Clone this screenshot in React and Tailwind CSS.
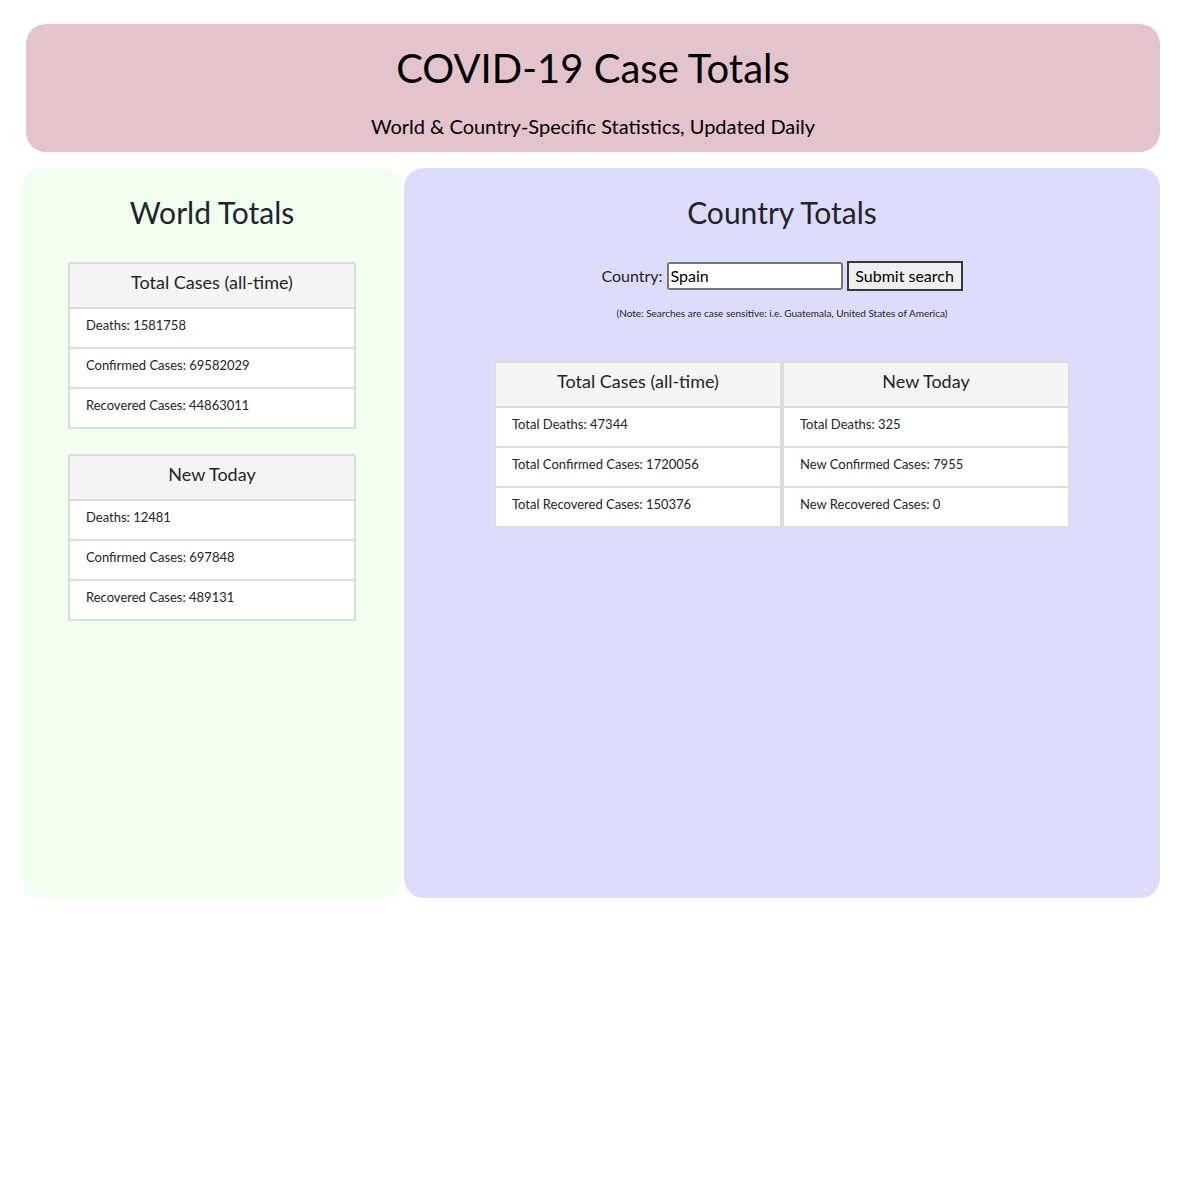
import React from "react";

function Card({ title, rows }) {
  return (
    <div className="w-[288px] border-2 border-[#dcdcdc] rounded-[3px] bg-white">
      <div className="h-[45px] bg-[#f5f5f5] pt-[7px] text-center text-[18px] leading-[22px] text-[#212529] border-b-2 border-[#dcdcdc]">
        {title}
      </div>
      {rows.map((r, i) => (
        <div
          key={i}
          className={`pl-[16px] pt-[8px] text-[13px] leading-[16px] text-[#212529] ${i < rows.length - 1 ? "border-b-2 border-[#dcdcdc] h-[40px]" : "h-[38px]"}`}
        >
          {r}
        </div>
      ))}
    </div>
  );
}

export default function App() {
  return (
    <div className="w-[1190px] h-[1190px] bg-white" style={{ fontFamily: "Lato, 'Noto Sans', sans-serif" }}>
      <div className="pt-[24px] pl-[26px]">
        <div className="w-[1134px] h-[128px] bg-[#e4c4cc] rounded-[20px] flex flex-col items-center pt-[20px]">
          <h1 className="text-[40px] leading-[48px] text-black">COVID-19 Case Totals</h1>
          <p className="mt-[20px] text-[20px] leading-[28px] text-black">World &amp; Country-Specific Statistics, Updated Daily</p>
        </div>
      </div>
      <div className="flex gap-[2px] pl-[22px] mt-[16px]">
        <div className="w-[380px] h-[730px] bg-[#f0fff0] rounded-[20px] flex flex-col items-center pt-[26px]">
          <h2 className="text-[30px] leading-[36px] text-[#212529]">World Totals</h2>
          <div className="mt-[32px]">
            <Card
              title="Total Cases (all-time)"
              rows={["Deaths: 1581758", "Confirmed Cases: 69582029", "Recovered Cases: 44863011"]}
            />
          </div>
          <div className="mt-[25px]">
            <Card
              title="New Today"
              rows={["Deaths: 12481", "Confirmed Cases: 697848", "Recovered Cases: 489131"]}
            />
          </div>
        </div>
        <div className="w-[756px] h-[730px] bg-[#dddcfb] rounded-[20px] flex flex-col items-center pt-[26px]">
          <h2 className="text-[30px] leading-[36px] text-[#212529]">Country Totals</h2>
          <div className="mt-[31px] flex items-center text-[16px] text-[#212529]">
            <span className="mr-[4px]">Country:</span>
            <div className="w-[176px] h-[28px] border-2 border-[#767676] rounded-[3px] bg-white flex items-center pl-[2px] text-black">
              Spain
            </div>
            <button className="ml-[4px] w-[116px] h-[30px] bg-[#efefef] border-2 border-[#3a3a3a] text-black text-[16px] leading-[20px]">
              Submit search
            </button>
          </div>
          <p className="mt-[16px] text-[10px] leading-[12px] text-[#212529]">
            (Note: Searches are case sensitive: i.e. Guatemala, United States of America)
          </p>
          <div className="mt-[42px] flex">
            <Card
              title="Total Cases (all-time)"
              rows={["Total Deaths: 47344", "Total Confirmed Cases: 1720056", "Total Recovered Cases: 150376"]}
            />
            <Card
              title="New Today"
              rows={["Total Deaths: 325", "New Confirmed Cases: 7955", "New Recovered Cases: 0"]}
            />
          </div>
        </div>
      </div>
    </div>
  );
}
